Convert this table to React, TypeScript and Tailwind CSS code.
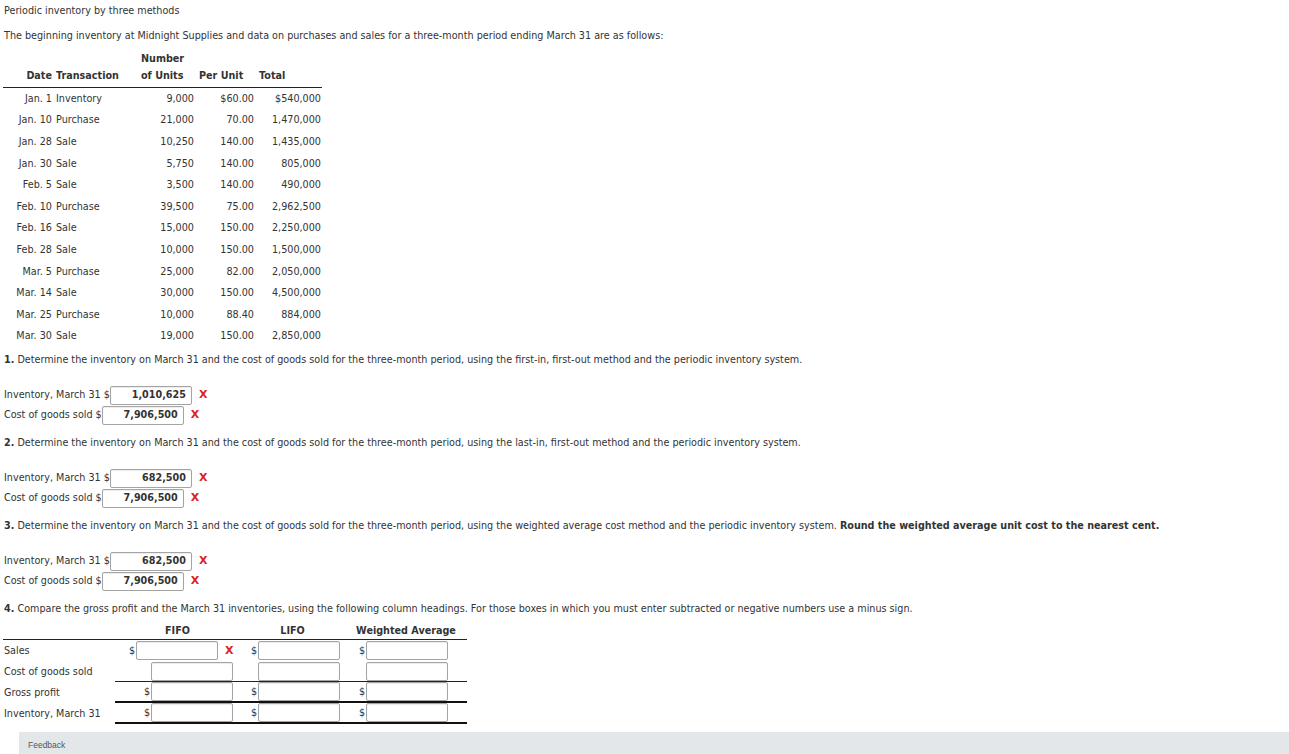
import React from 'react'

const rows: [string, string, string, string, string][] = [
  ['Jan. 1', 'Inventory', '9,000', '$60.00', '$540,000'],
  ['Jan. 10', 'Purchase', '21,000', '70.00', '1,470,000'],
  ['Jan. 28', 'Sale', '10,250', '140.00', '1,435,000'],
  ['Jan. 30', 'Sale', '5,750', '140.00', '805,000'],
  ['Feb. 5', 'Sale', '3,500', '140.00', '490,000'],
  ['Feb. 10', 'Purchase', '39,500', '75.00', '2,962,500'],
  ['Feb. 16', 'Sale', '15,000', '150.00', '2,250,000'],
  ['Feb. 28', 'Sale', '10,000', '150.00', '1,500,000'],
  ['Mar. 5', 'Purchase', '25,000', '82.00', '2,050,000'],
  ['Mar. 14', 'Sale', '30,000', '150.00', '4,500,000'],
  ['Mar. 25', 'Purchase', '10,000', '88.40', '884,000'],
  ['Mar. 30', 'Sale', '19,000', '150.00', '2,850,000'],
]

function Wrong() {
  return <span className="font-bold text-[11px] leading-none text-[#d8232a]">X</span>
}

function Box({ value = '', className = '' }: { value?: string; className?: string }) {
  return (
    <div
      className={`flex h-[19px] w-[82px] items-center justify-end rounded-[2px] border border-[#a4a4a4] bg-white pr-[5px] font-bold shadow-[inset_0_1px_1px_rgba(0,0,0,0.08)] ${className}`}
    >
      {value}
    </div>
  )
}

function AnswerRows({ inv, cogs }: { inv: string; cogs: string }) {
  return (
    <div className="mt-[18px]">
      <div className="flex h-[20px] items-center pl-[4px]">
        <span>Inventory, March 31 $</span>
        <Box value={inv} />
        <span className="ml-[7px]">
          <Wrong />
        </span>
      </div>
      <div className="flex h-[20px] items-center pl-[4px]">
        <span>Cost of goods sold $</span>
        <Box value={cogs} />
        <span className="ml-[7px]">
          <Wrong />
        </span>
      </div>
    </div>
  )
}

function Cell({
  dollar,
  x,
  pr,
  border = '',
}: {
  dollar?: boolean
  x?: boolean
  pr: string
  border?: string
}) {
  return (
    <div className={`flex h-full items-center justify-end ${pr} ${border}`}>
      {dollar && <span className="mr-[1px]">$</span>}
      <Box />
      {x && (
        <span className="ml-[7px] w-[8px]">
          <Wrong />
        </span>
      )}
    </div>
  )
}

export default function App() {
  const cols = 'grid grid-cols-[112px_125px_105px_122px]'
  return (
    <div className="relative h-[754px] w-[1289px] overflow-hidden bg-white font-['DejaVu_Sans',Verdana,sans-serif] text-[9.65px] leading-[14px] text-[#333]">
      <div className="pt-[4px] pl-[4px]">Periodic inventory by three methods</div>
      <div className="mt-[11px] pl-[4px]">
        The beginning inventory at Midnight Supplies and data on purchases and sales for a three-month period ending March 31 are as follows:
      </div>

      <div className="mt-[7px] ml-[3px] w-[319px]">
        <div className="grid grid-cols-[51px_82px_60px_60px_66px] border-b border-[#222] pb-[3px] font-bold">
          <div className="h-[17px]" />
          <div className="h-[17px]" />
          <div className="flex h-[17px] items-center pl-[5px]">Number</div>
          <div className="h-[17px]" />
          <div className="h-[17px]" />
          <div className="flex h-[17px] items-center justify-end pr-[2px]">Date</div>
          <div className="flex h-[17px] items-center pl-[2px]">Transaction</div>
          <div className="flex h-[17px] items-center pl-[5px]">of Units</div>
          <div className="flex h-[17px] items-center pl-[3px]">Per Unit</div>
          <div className="flex h-[17px] items-center pl-[3px]">Total</div>
        </div>
        {rows.map((r) => (
          <div key={r[0]} className="grid h-[21.6px] grid-cols-[51px_82px_60px_60px_66px] items-center">
            <div className="pr-[2px] text-right">{r[0]}</div>
            <div className="pl-[2px]">{r[1]}</div>
            <div className="pr-[2px] text-right">{r[2]}</div>
            <div className="pr-[2px] text-right">{r[3]}</div>
            <div className="pr-[1px] text-right">{r[4]}</div>
          </div>
        ))}
      </div>

      <div className="mt-[6px] pl-[4px]">
        <span className="font-bold">1.</span> Determine the inventory on March 31 and the cost of goods sold for the three-month period, using the first-in, first-out method and the periodic inventory system.
      </div>
      <AnswerRows inv="1,010,625" cogs="7,906,500" />

      <div className="mt-[11px] pl-[4px]">
        <span className="font-bold">2.</span> Determine the inventory on March 31 and the cost of goods sold for the three-month period, using the last-in, first-out method and the periodic inventory system.
      </div>
      <AnswerRows inv="682,500" cogs="7,906,500" />

      <div className="mt-[11px] pl-[4px]">
        <span className="font-bold">3.</span> Determine the inventory on March 31 and the cost of goods sold for the three-month period, using the weighted average cost method and the periodic inventory system.{' '}
        <span className="font-bold">Round the weighted average unit cost to the nearest cent.</span>
      </div>
      <AnswerRows inv="682,500" cogs="7,906,500" />

      <div className="mt-[11px] pl-[4px]">
        <span className="font-bold">4.</span> Compare the gross profit and the March 31 inventories, using the following column headings. For those boxes in which you must enter subtracted or negative numbers use a minus sign.
      </div>

      <div className="mt-[7px] ml-[3px] w-[464px]">
        <div className={`${cols} h-[17px] items-center border-b border-[#222] font-bold`}>
          <div />
          <div className="text-center">FIFO</div>
          <div className="text-center">LIFO</div>
          <div className="text-center">Weighted Average</div>
        </div>
        <div className={`${cols} h-[21px]`}>
          <div className="flex items-center pl-[1px]">Sales</div>
          <Cell dollar x pr="pr-[7px]" />
          <Cell dollar pr="pr-[5px]" />
          <Cell dollar pr="pr-[19px]" />
        </div>
        <div className={`${cols} h-[21px]`}>
          <div className="flex items-center pl-[1px]">Cost of goods sold</div>
          <Cell pr="pr-[7px]" border="border-b border-[#222]" />
          <Cell pr="pr-[5px]" border="border-b border-[#222]" />
          <Cell pr="pr-[19px]" border="border-b border-[#222]" />
        </div>
        <div className={`${cols} h-[21px]`}>
          <div className="flex items-center pl-[1px]">Gross profit</div>
          <Cell dollar pr="pr-[7px]" border="border-b-2 border-[#111]" />
          <Cell dollar pr="pr-[5px]" border="border-b-2 border-[#111]" />
          <Cell dollar pr="pr-[19px]" border="border-b-2 border-[#111]" />
        </div>
        <div className={`${cols} h-[21px]`}>
          <div className="flex items-center pl-[1px]">Inventory, March 31</div>
          <Cell dollar pr="pr-[7px]" border="border-b-2 border-[#111]" />
          <Cell dollar pr="pr-[5px]" border="border-b-2 border-[#111]" />
          <Cell dollar pr="pr-[19px]" border="border-b-2 border-[#111]" />
        </div>
      </div>

      <div className="mt-[8px] ml-[19px] flex h-[30px] items-start bg-[#e3e7ea] pt-[6px] pl-[9px] font-['Liberation_Sans',Arial,sans-serif] text-[8.5px] text-[#555]">
        Feedback
      </div>
    </div>
  )
}
